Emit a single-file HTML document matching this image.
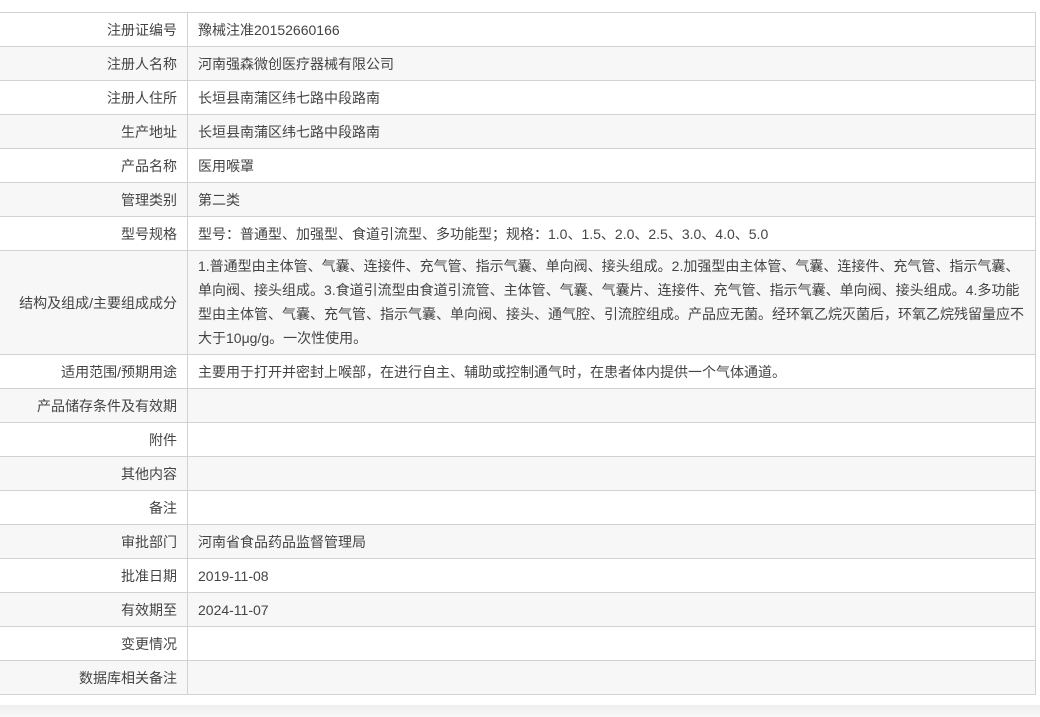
<!DOCTYPE html>
<html><head><meta charset="utf-8"><style>
body{margin:0;background:#fff;width:1040px;height:717px;overflow:hidden;position:relative;font-family:"Liberation Sans","Noto Sans CJK SC",sans-serif;font-size:14px;color:#444}
table{position:absolute;left:-1px;top:12px;width:1037px;border-collapse:collapse}
td{border:1px solid #d2d2d2;height:34px;padding:0 10px;box-sizing:border-box;vertical-align:middle}
td.l{width:188px;text-align:right}
tr:nth-child(even) td{background:#f7f7f7}
td.m{line-height:24px;padding:3px 10px 4px;height:103px}
.sh{position:absolute;left:0;right:0;top:705px;height:12px;background:linear-gradient(#eee,#f8f8f8)}
</style></head><body>
<table>
<tr><td class="l">注册证编号</td><td>豫械注准20152660166</td></tr>
<tr><td class="l">注册人名称</td><td>河南强森微创医疗器械有限公司</td></tr>
<tr><td class="l">注册人住所</td><td>长垣县南蒲区纬七路中段路南</td></tr>
<tr><td class="l">生产地址</td><td>长垣县南蒲区纬七路中段路南</td></tr>
<tr><td class="l">产品名称</td><td>医用喉罩</td></tr>
<tr><td class="l">管理类别</td><td>第二类</td></tr>
<tr><td class="l">型号规格</td><td>型号：普通型、加强型、食道引流型、多功能型；规格：1.0、1.5、2.0、2.5、3.0、4.0、5.0</td></tr>
<tr><td class="l">结构及组成/主要组成成分</td><td class="m">1.普通型由主体管、气囊、连接件、充气管、指示气囊、单向阀、接头组成。2.加强型由主体管、气囊、连接件、充气管、指示气囊、单向阀、接头组成。3.食道引流型由食道引流管、主体管、气囊、气囊片、连接件、充气管、指示气囊、单向阀、接头组成。4.多功能型由主体管、气囊、充气管、指示气囊、单向阀、接头、通气腔、引流腔组成。产品应无菌。经环氧乙烷灭菌后，环氧乙烷残留量应不大于10μg/g。一次性使用。</td></tr>
<tr><td class="l">适用范围/预期用途</td><td>主要用于打开并密封上喉部，在进行自主、辅助或控制通气时，在患者体内提供一个气体通道。</td></tr>
<tr><td class="l">产品储存条件及有效期</td><td></td></tr>
<tr><td class="l">附件</td><td></td></tr>
<tr><td class="l">其他内容</td><td></td></tr>
<tr><td class="l">备注</td><td></td></tr>
<tr><td class="l">审批部门</td><td>河南省食品药品监督管理局</td></tr>
<tr><td class="l">批准日期</td><td>2019-11-08</td></tr>
<tr><td class="l">有效期至</td><td>2024-11-07</td></tr>
<tr><td class="l">变更情况</td><td></td></tr>
<tr><td class="l">数据库相关备注</td><td></td></tr>
</table>
<div class="sh"></div>
</body></html>
